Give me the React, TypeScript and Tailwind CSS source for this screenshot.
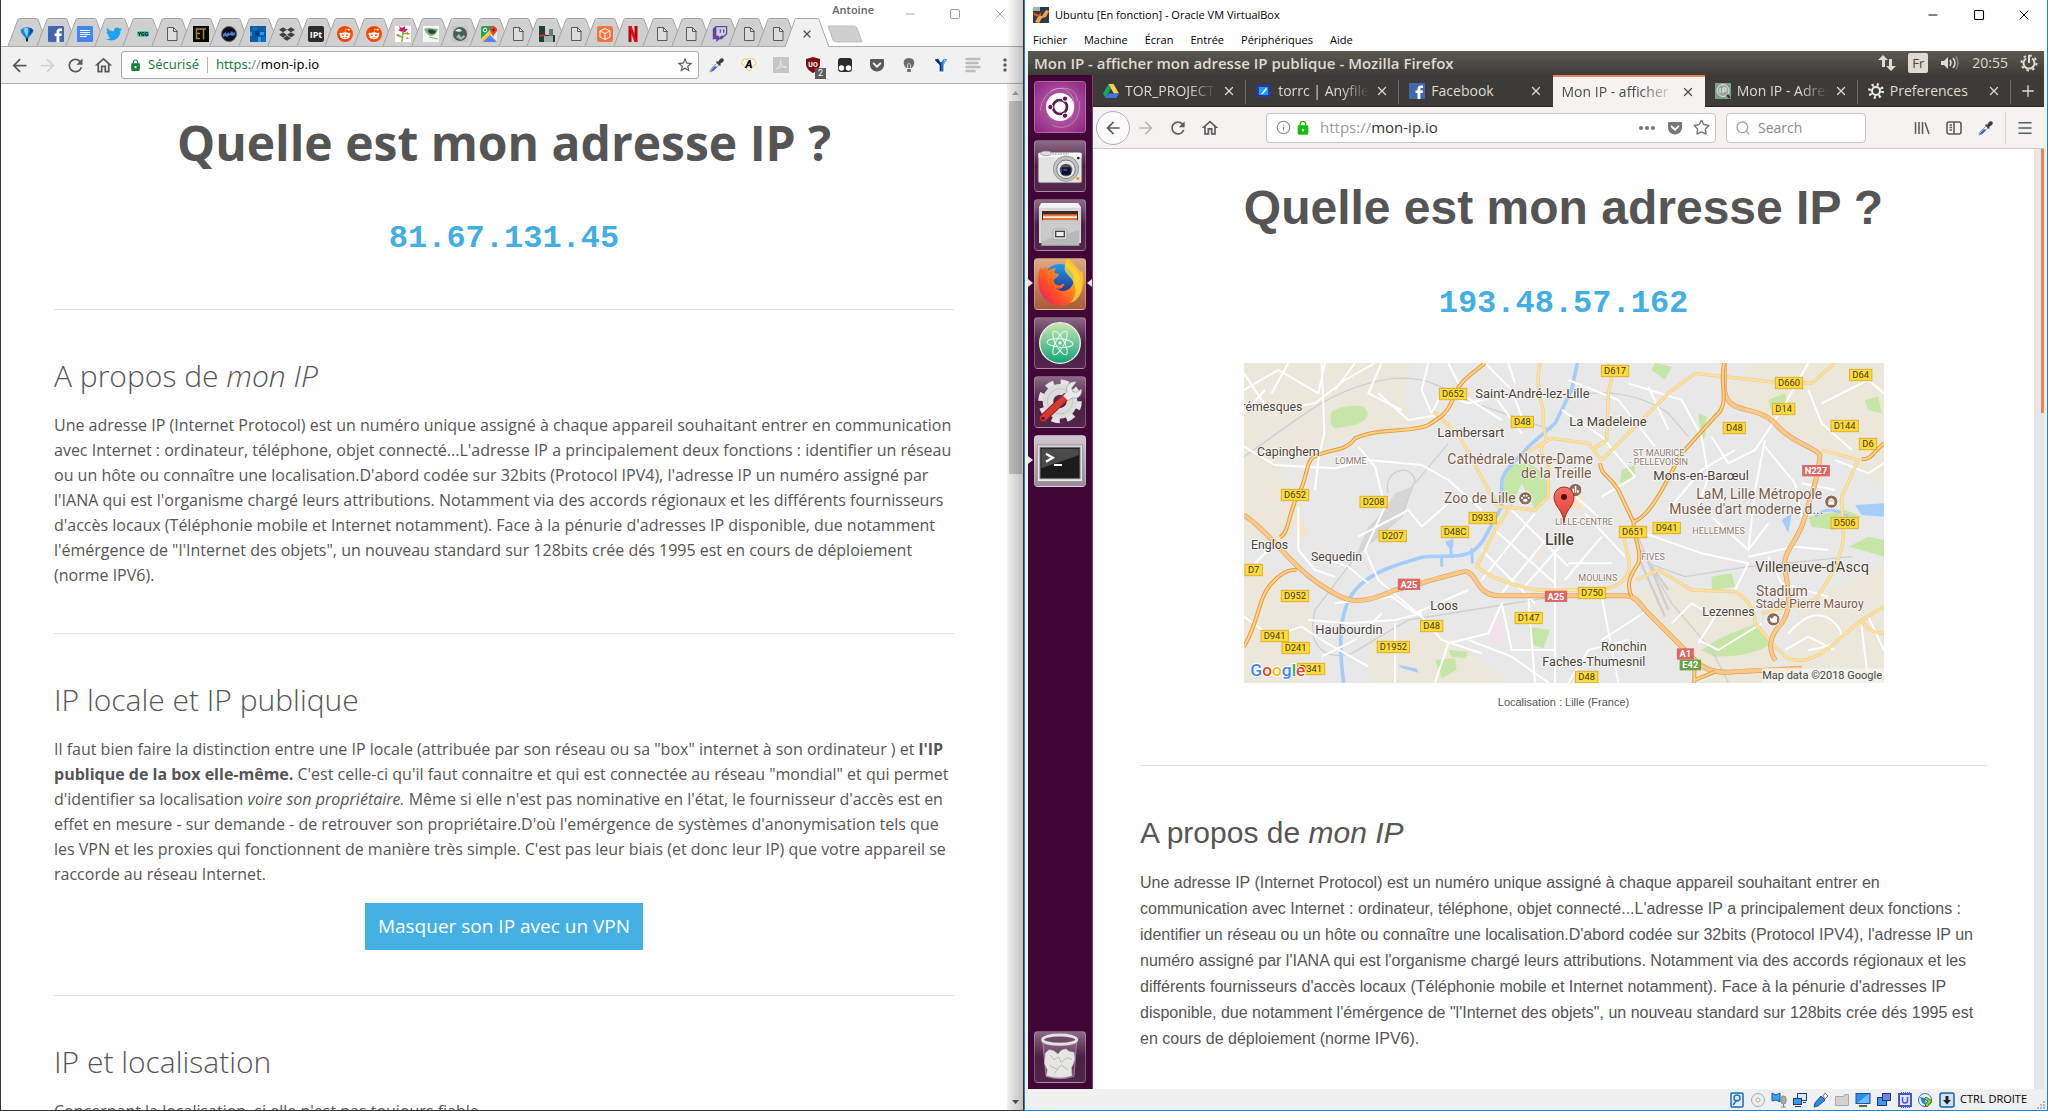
import React from "react";
import {
  FaDropbox,
  FaGetPocket,
  FaRedditAlien,
  FaTwitch,
  FaTwitter,
} from "react-icons/fa";
import {
  MdArrowBack,
  MdArrowForward,
  MdLock,
  MdMoreVert,
  MdOutlineHome,
  MdRefresh,
  MdStarBorder,
} from "react-icons/md";
import { Info, Menu, Minus, Plus, Search, Square, Star, X } from "lucide-react";

/* ---------- small icons ---------- */

function PageIcon() {
  return (
    <svg viewBox="0 0 16 16" className="size-4" fill="none" stroke="#5a5a5a">
      <path d="M3.500 1.500h6l3.500 3.500v9.500h-9.500z" fill="#dcdcdc" />
      <path d="M9.500 1.500v4h4" />
    </svg>
  );
}

function Balloon() {
  return (
    <svg viewBox="0 0 16 16" className="size-4">
      <path d="M8 15C7 11 1.500 8 1.500 4Q8-2 14.500 4C14.500 8 9 11 8 15z" fill="#1a86d6" />
      <path d="M8 11C7 8 5 6 4.500 3Q8 0 9 3 9 8 8 11z" fill="#8fd0ff" />
      <path d="M9 10C11 8 14 6 14 4Q12 2 11 2 11 7 9 10z" fill="#0b4a86" />
      <path d="M7 12h2v3.500H7z" fill="#062a4c" />
    </svg>
  );
}

function VIcon() {
  return (
    <svg viewBox="0 0 16 16" className="size-4">
      <path d="M1 2l4-1 3 4 3-4 4 1-4 6v7H6V8z" fill="#1b6fd0" stroke="#fff" />
      <path d="M2 3l3-1 3 5v7H7V8z" fill="#0b2c66" />
      <path d="M11 2l3 1-4 5z" fill="#6cc0ff" />
    </svg>
  );
}

function Box({ className, children }: { className: string; children?: React.ReactNode }) {
  return (
    <span className={`flex size-4 items-center justify-center overflow-hidden ${className}`}>
      {children}
    </span>
  );
}

function FacebookIcon() {
  return (
    <svg viewBox="0 0 16 16" className="size-4 shrink-0">
      <rect width="16" height="16" rx="1" fill="#4267b2" />
      <path
        d="M8.500 16V10H6.500V7.500h2V6c0-2.200 1.200-3.500 3.400-3.500H14v2.400h-1.300c-1 0-1.300.4-1.300 1.300v1.300H14L13.600 10h-2.200v6z"
        fill="#fff"
      />
    </svg>
  );
}

function Dropper() {
  return (
    <svg viewBox="0 0 16 16" className="size-4">
      <path d="M1 15l1-3 6-6 2 2-6 6z" fill="#dfe6f5" stroke="#7b7b7b" strokeWidth=".7" />
      <path d="M2 14l1-2 3-3 2 1-4 4z" fill="#3d63d8" />
      <path d="M7 5l4 4 1-1-1-1 3-2c2-2 0-5-3-3L9 5 8 4z" fill="#3b3f45" />
    </svg>
  );
}

const page = <PageIcon />;
const reddit = (
  <Box className="rounded-full bg-[#ff4500] text-white">
    <FaRedditAlien className="size-3" />
  </Box>
);

const favicons: { title: string; icon: React.ReactNode }[] = [
  { title: "Ballon", icon: <Balloon /> },
  { title: "Facebook", icon: <FacebookIcon /> },
  {
    title: "Docs",
    icon: (
      <svg viewBox="0 0 16 16" className="size-4">
        <rect width="16" height="16" rx="1" fill="#4285f4" />
        <path d="M3 4.500h10M3 6.500h10M3 8.500h10M3 10.500h7" stroke="#fff" />
      </svg>
    ),
  },
  { title: "Twitter", icon: <FaTwitter className="size-4 text-[#1da1f2]" /> },
  {
    title: "YGG",
    icon: (
      <svg viewBox="0 0 16 16" className="size-4">
        <rect x="2" y="5" width="12" height="6" rx="2" fill="#40d8c0" />
        <text x="8" y="10" textAnchor="middle" fontSize="5" fontWeight="900" fontFamily="Inter" fill="#111">
          YGG
        </text>
      </svg>
    ),
  },
  { title: "Page", icon: page },
  {
    title: "ET",
    icon: (
      <svg viewBox="0 0 16 16" className="size-4">
        <rect width="16" height="16" fill="#050505" />
        <path d="M8 3H3.500v9.500H7M3.500 7.500H7M8 3h5M10.500 3v10.500" stroke="#a8862f" fill="none" strokeWidth="1.500" />
      </svg>
    ),
  },
  {
    title: "Globe",
    icon: (
      <svg viewBox="0 0 16 16" className="size-4">
        <circle cx="8" cy="8" r="7.500" fill="#0b1020" stroke="#5c6064" />
        <path d="M2 8l3-2v2l3-2v2l3-3 1 2 2-1v3l-3 1-2-1-3 2-2-1-2 1z" fill="#4a7fc0" />
      </svg>
    ),
  },
  {
    title: "Blocs",
    icon: (
      <svg viewBox="0 0 16 16" className="size-4">
        <rect width="16" height="16" fill="#0a5aa8" />
        <path d="M5 5h4v5H5z" fill="#0c3f7a" />
        <path d="M10 6h4v3h-4zM8 11h3v5H8zM0 6h2v4H0z" fill="#1aa3ec" />
        <path d="M3 1h4v3H3zM12 11h4v5h-4z" fill="#0b70c4" />
      </svg>
    ),
  },
  { title: "Dropbox", icon: <FaDropbox className="size-4 text-[#3f3f3f]" /> },
  {
    title: "IPt",
    icon: (
      <Box className="rounded-xs bg-[#2c2c2c]">
        <svg viewBox="0 0 16 16" className="size-4">
          <text x="8" y="11.500" textAnchor="middle" fontSize="9" fontWeight="700" fontFamily="Open Sans" fill="#fff">
            IPt
          </text>
        </svg>
      </Box>
    ),
  },
  { title: "Reddit", icon: reddit },
  { title: "Reddit 2", icon: reddit },
  {
    title: "Fleur",
    icon: (
      <svg viewBox="0 0 16 16" className="size-4">
        <rect width="16" height="16" fill="#fff" />
        <path d="M7 6L3 4l2-1-1-3 3 2 3-2v3l3 0-3 3-3 1z" fill="#d81b60" />
        <path d="M8 5c0 5-1 8-1 11M8 8l5-1M7 11l-5-2" stroke="#7cb342" fill="none" strokeWidth="1.500" />
        <path d="M12 6l3 2-3 1zM4 8L1 9l3 2zM12 11l2 2-3 0z" fill="#ef6c3a" />
      </svg>
    ),
  },
  {
    title: "Aigle",
    icon: (
      <svg viewBox="0 0 16 16" className="size-4">
        <rect width="16" height="16" fill="#f4f8f4" />
        <path d="M1 3c5-2 9 0 14 0-1 4-3 6-6 7-4 0-6-3-8-7z" fill="#7fae8a" />
        <path d="M5 4c3-1 6 0 8 1-1 3-3 3-5 3-2-1-3-2-3-4z" fill="#234a2d" />
        <path d="M6 11l9 2" stroke="#6dc06f" />
      </svg>
    ),
  },
  {
    title: "Sphère",
    icon: (
      <svg viewBox="0 0 16 16" className="size-4">
        <rect width="16" height="16" fill="#c4c6c4" />
        <circle cx="8" cy="8" r="7" fill="#48605a" />
        <path d="M3 5c3-3 6-2 7 0-2 1-4 1-7 0z" fill="#e8eeee" />
        <path d="M4 11l3-3 2 3 3-2 1 2-4 3z" fill="#a9b9b0" />
      </svg>
    ),
  },
  {
    title: "Maps",
    icon: (
      <svg viewBox="0 0 16 16" className="size-4">
        <path d="M0 2c0-1 1-2 2-2h12c1 0 2 1 2 2v12c0 1-1 2-2 2H2c-1 0-2-1-2-2z" fill="#e8eaed" />
        <path d="M0 2c0-1 1-2 2-2h11L0 13z" fill="#2ba24c" />
        <path d="M8 8l8 8H1z" fill="#4a89f3" />
        <path d="M0 14L12 2l2 2L2 16z" fill="#fbc02d" />
        <path d="M12 0c2 0 4 1 4 4 0 2-2 3-4 7-1-4-3-5-3-7 0-3 1-4 3-4z" fill="#e24436" />
        <circle cx="12.500" cy="4" r="1.300" fill="#7b1d14" />
        <circle cx="4" cy="4" r="1.800" fill="none" stroke="#fff" />
      </svg>
    ),
  },
  { title: "Page 2", icon: page },
  {
    title: "Photo",
    icon: (
      <svg viewBox="0 0 16 16" className="size-4">
        <rect width="16" height="16" fill="#1d4034" />
        <path d="M6 0h10v9H6z" fill="#c9d3cc" />
        <path d="M5 10h9v6H5z" fill="#9fb5aa" />
        <path d="M0 9l7-1v2l-6 1z" fill="#d0322b" />
        <path d="M10 3h4v7h-4z" fill="#6c7b73" />
      </svg>
    ),
  },
  { title: "Page 3", icon: page },
  {
    title: "Cube",
    icon: (
      <svg viewBox="0 0 16 16" className="size-4" fill="none" stroke="#fff">
        <rect width="16" height="16" rx="2.500" fill="#f4743b" stroke="none" />
        <path d="M8 2.500l5 2.500v6l-5 2.500L3 11V5zM3 5l5 2.500L13 5M8 7.500v6" />
      </svg>
    ),
  },
  {
    title: "Netflix",
    icon: (
      <svg viewBox="0 0 16 16" className="size-4">
        <path d="M3.500 0h3v16h-3zM9.500 0h3v16h-3z" fill="#b1060f" />
        <path d="M3.500 0h3l6 16h-3z" fill="#e50914" />
      </svg>
    ),
  },
  { title: "Page 4", icon: page },
  { title: "Page 5", icon: page },
  { title: "Twitch", icon: <FaTwitch className="size-4 text-[#6441a5]" /> },
  { title: "Page 6", icon: page },
  { title: "Page 7", icon: page },
];

/* ---------- Chrome window ---------- */

function ChromeTabs() {
  return (
    <div className="relative flex h-[46px] items-end bg-white pl-[12px]">
      <div className="flex w-[779px] shrink-0">
        {favicons.map((tab) => (
          <button key={tab.title} aria-label={tab.title} className="relative flex h-7 flex-1 items-center justify-center">
            <svg viewBox="0 0 42 28" className="absolute -left-[6px] top-0 h-7 w-[42px]">
              <path d="M1 28L11 1.500Q11.500 .5 12.500 .5h17Q30.500 .5 31 1.500L41 28" fill="#d0d0d0" stroke="#a3a3a3" />
            </svg>
            <span className="relative mt-1">{tab.icon}</span>
          </button>
        ))}
      </div>
      <button aria-label="Fermer l'onglet" className="relative flex h-7 w-[30px] shrink-0 items-center justify-center">
        <svg viewBox="0 0 46 29" className="absolute -left-[8px] top-0 z-10 h-[29px] w-[46px]">
          <path d="M1 29L11 1.500Q11.500 .5 12.500 .5h21Q34.500 .5 35 1.500L45 29" fill="#f1f1f1" stroke="#a8a8a8" />
        </svg>
        <X className="relative z-10 mt-1 size-3 text-[#4c4c4c]" strokeWidth={2.500} />
      </button>
      <button aria-label="Nouvel onglet" className="mb-[3px] ml-[5px] shrink-0 self-end">
        <svg viewBox="0 0 36 18" className="h-[18px] w-9">
          <path d="M1 1h26q2 0 3 2l5 14H9q-2 0-3-2z" fill="#cfcfcf" stroke="#bdbdbd" />
        </svg>
      </button>
      <span className="absolute top-[3px] right-[149px] font-['Open_Sans'] text-[11px] leading-[14px] font-semibold text-[#666]">
        Antoine
      </span>
      <div className="flex h-full flex-1 items-start justify-end text-[#9a9a9a]">
        <button aria-label="Réduire" className="flex h-7 w-[45px] items-center justify-center">
          <Minus className="size-[14px]" strokeWidth={1.500} />
        </button>
        <button aria-label="Agrandir" className="flex h-7 w-[45px] items-center justify-center">
          <Square className="size-3" strokeWidth={2} />
        </button>
        <button aria-label="Fermer" className="flex h-7 w-[46px] items-center justify-center">
          <X className="size-4" strokeWidth={1.300} />
        </button>
      </div>
    </div>
  );
}

const extensions: { title: string; icon: React.ReactNode }[] = [
  { title: "Pipette", icon: <Dropper /> },
  {
    title: "A",
    icon: (
      <svg viewBox="0 0 16 16" className="size-4">
        <path d="M3 2h10l2.500 4L8 14 .5 6z" fill="#fff" stroke="#f6c432" />
        <text x="8" y="11" textAnchor="middle" fontSize="11" fontWeight="900" fontStyle="italic" fontFamily="Roboto">
          A
        </text>
      </svg>
    ),
  },
  {
    title: "PDF",
    icon: (
      <svg viewBox="0 0 16 16" className="size-4">
        <rect width="16" height="16" fill="#c6c6c6" />
        <path d="M3 12c4-2 5-6 4.500-9M7.500 5c1 4 3 6 6 5.500M4 12c2-2 6-3 9-2" stroke="#ececec" fill="none" />
      </svg>
    ),
  },
  {
    title: "uBlock",
    icon: (
      <span className="relative">
        <svg viewBox="0 0 16 16" className="size-4">
          <path d="M8 0l7 2v5c0 4-3 7-7 9-4-2-7-5-7-9V2z" fill="#800f14" />
          <text x="8" y="9.500" textAnchor="middle" fontSize="7" fontWeight="700" fontFamily="Roboto" fill="#fff">
            UO
          </text>
        </svg>
        <span className="absolute top-[11px] left-[10px] flex h-[11px] w-[11px] items-center justify-center bg-[#5c5c5c] font-['Roboto'] text-[9px] leading-none text-white">
          2
        </span>
      </span>
    ),
  },
  {
    title: "Tampermonkey",
    icon: (
      <svg viewBox="0 0 16 16" className="size-4">
        <rect x="1" y="1" width="14" height="14" rx="3" fill="#2c2c2c" />
        <circle cx="4.500" cy="11" r="2.700" fill="#fff" />
        <circle cx="11.500" cy="11" r="2.700" fill="#fff" />
      </svg>
    ),
  },
  { title: "Pocket", icon: <FaGetPocket className="size-4 text-[#5a5a5a]" /> },
  {
    title: "Ampoule",
    icon: (
      <svg viewBox="0 0 16 16" className="size-4">
        <path d="M8 1c4 0 6 3 5 6 0 2-2 3-2 4H5c0-1-2-2-2-4-1-3 1-6 5-6z" fill="#6b6b6b" />
        <path d="M6.500 14V8c0-2 3-2 3 0v6" stroke="#d9d9d9" fill="none" />
        <path d="M6 12h4v3H6z" fill="#777" />
      </svg>
    ),
  },
  { title: "V", icon: <VIcon /> },
  {
    title: "Lecture",
    icon: (
      <svg viewBox="0 0 16 16" className="size-4" stroke="#bdbdbd" strokeWidth="2.500" strokeLinecap="round">
        <path d="M1.500 2h13M1.500 6h11M1.500 10h13M1.500 14h8" />
      </svg>
    ),
  },
];

function ChromeToolbar() {
  return (
    <div className="flex h-[38px] items-center border-y border-[#ababab] bg-[#f1f1f1] pl-2 text-[#5a5a5a]">
      <button aria-label="Précédent" className="mr-[7px]">
        <MdArrowBack className="size-[21px]" />
      </button>
      <button aria-label="Suivant" className="mr-[7px] text-[#d2d2d2]">
        <MdArrowForward className="size-[21px]" />
      </button>
      <button aria-label="Actualiser" className="mr-[7px]">
        <MdRefresh className="size-[21px]" />
      </button>
      <button aria-label="Accueil" className="mr-[7px]">
        <MdOutlineHome className="size-[21px]" />
      </button>
      <div className="flex h-7 flex-1 items-center rounded-[3px] border border-[#a9a9a9] bg-white font-['Noto_Sans'] text-[13px]">
        <MdLock className="ml-[7px] size-[13px] text-[#188038]" />
        <span className="ml-[6px] text-[#188038]">Sécurisé</span>
        <span className="mx-2 h-4 w-px bg-[#b5b5b5]" />
        <span className="text-[#188038]">https:</span>
        <span className="text-[#888]">//</span>
        <span className="text-black">mon-ip.io</span>
        <button aria-label="Favori" className="mr-1 ml-auto">
          <MdStarBorder className="size-[18px]" />
        </button>
      </div>
      <div className="ml-[10px] flex gap-4">
        {extensions.map((ext) => (
          <button key={ext.title} aria-label={ext.title} className="flex size-4">
            {ext.icon}
          </button>
        ))}
      </div>
      <button aria-label="Menu" className="mr-2 ml-[14px]">
        <MdMoreVert className="size-5" />
      </button>
    </div>
  );
}

function LeftPage() {
  return (
    <main className="min-w-0 flex-1 overflow-hidden px-[53px] font-['Open_Sans'] text-base leading-[25px] text-[#555]">
      <h1 className="mt-[29px] text-center text-5xl leading-[60px] font-bold">Quelle est mon adresse IP ?</h1>
      <p className="mt-[46px] text-center font-['Liberation_Mono'] text-[32px] leading-10 font-bold text-[#42afe3]">
        81.67.131.45
      </p>
      <hr className="mt-[50px] border-[#e1e1e1]" />
      <h2 className="mt-[46px] text-3xl leading-10 font-light">
        A propos de <em>mon IP</em>
      </h2>
      <p className="mt-[17px]">
        Une adresse IP (Internet Protocol) est un numéro unique assigné à chaque appareil souhaitant entrer en
        communication avec Internet : ordinateur, téléphone, objet connecté...L'adresse IP a principalement deux
        fonctions : identifier un réseau ou un hôte ou connaître une localisation.D'abord codée sur 32bits (Protocol
        IPV4), l'adresse IP un numéro assigné par l'IANA qui est l'organisme chargé leurs attributions. Notamment via
        des accords régionaux et les différents fournisseurs d'accès locaux (Téléphonie mobile et Internet notamment).
        Face à la pénurie d'adresses IP disponible, due notamment l'émérgence de "l'Internet des objets", un nouveau
        standard sur 128bits crée dés 1995 est en cours de déploiement (norme IPV6).
      </p>
      <hr className="mt-[45px] border-[#e1e1e1]" />
      <h2 className="mt-[46px] text-3xl leading-10 font-light">IP locale et IP publique</h2>
      <p className="mt-[17px]">
        Il faut bien faire la distinction entre une IP locale (attribuée par son réseau ou sa "box" internet à son
        ordinateur ) et <strong className="font-bold">l'IP publique de la box elle-même.</strong> C'est celle-ci qu'il
        faut connaitre et qui est connectée au réseau "mondial" et qui permet d'identifier sa localisation{" "}
        <em>voire son propriétaire.</em> Même si elle n'est pas nominative en l'état, le fournisseur d'accès est en
        effet en mesure - sur demande - de retrouver son propriétaire.D'où l'emérgence de systèmes d'anonymisation tels
        que les VPN et les proxies qui fonctionnent de manière très simple. C'est pas leur biais (et donc leur IP) que
        votre appareil se raccorde au réseau Internet.
      </p>
      <div className="mt-4 text-center">
        <a href="#vpn" className="inline-flex h-[47px] items-center bg-[#45b0e3] px-[13px] text-[19px] text-white">
          Masquer son IP avec un VPN
        </a>
      </div>
      <hr className="mt-[45px] border-[#e1e1e1]" />
      <h2 className="mt-[46px] text-3xl leading-10 font-light">IP et localisation</h2>
      <p className="mt-[17px]">Concernant la localisation, si elle n'est pas toujours fiable</p>
    </main>
  );
}

function ChromeWindow() {
  return (
    <section className="relative flex min-w-0 flex-1 flex-col overflow-hidden border-x border-b border-[#333] bg-white">
      <ChromeTabs />
      <ChromeToolbar />
      <div className="flex min-h-0 flex-1">
        <LeftPage />
        <div className="flex w-4 flex-col items-center bg-[#f1f1f1]">
          <svg viewBox="0 0 17 17" className="size-[17px] shrink-0">
            <path d="M5 11l3.500-4 3.500 4z" fill="#a3a3a3" />
          </svg>
          <div className="h-[373px] w-[13px] bg-[#c1c1c1]" />
          <svg viewBox="0 0 17 17" className="mt-auto size-[17px] shrink-0">
            <path d="M5 7l3.500 4L12 7z" fill="#505050" />
          </svg>
        </div>
      </div>
      <div className="pointer-events-none absolute inset-y-0 right-0 w-4 bg-linear-to-r from-transparent to-black/20" />
    </section>
  );
}

/* ---------- Ubuntu guest ---------- */

function Tile({ title, className, children }: { title: string; className: string; children: React.ReactNode }) {
  return (
    <button
      aria-label={title}
      className={`block size-[52px] shrink-0 overflow-hidden rounded-[4px] border border-white/25 ${className}`}
    >
      <svg viewBox="3 3 150 150" className="size-full">
        {children}
      </svg>
    </button>
  );
}

function Launcher() {
  const dark = "bg-linear-to-b from-[#8c6a86] via-[#4c1f44] to-[#54254c]";
  return (
    <nav className="relative flex w-[65px] shrink-0 flex-col items-center gap-[7px] border-r border-[#7c3f74] bg-[#400635] py-[6px]">
      <Tile title="Ubuntu" className="bg-[radial-gradient(circle,#c06fb4,#8e2380)]">
        <path d="M20 90C20 10 130 0 130 60M135 60c10 80-60 90-80 70M50 30C100 0 140 60 110 110" fill="none" stroke="#fff" strokeOpacity=".35" strokeWidth="3" />
        <circle cx="78" cy="78" r="42" fill="#fff" />
        <circle cx="78" cy="78" r="21" fill="none" stroke="#5c1a53" strokeWidth="8" />
        <g fill="#5c1a53" stroke="#fff" strokeWidth="3">
          <circle cx="49" cy="78" r="8" />
          <circle cx="93" cy="53" r="8" />
          <circle cx="93" cy="104" r="8" />
        </g>
      </Tile>
      <Tile title="Appareil photo" className={dark}>
        <rect x="13" y="38" width="130" height="90" rx="5" fill="#e3e3e3" stroke="#8f8f8f" strokeWidth="2" />
        <rect x="13" y="38" width="130" height="14" rx="5" fill="#fafafa" />
        <ellipse cx="36" cy="40" rx="16" ry="7" fill="#ddd" stroke="#888" strokeWidth="2" />
        <path d="M55 42h50" stroke="#888" strokeWidth="3" strokeDasharray="5 3" />
        <circle cx="96" cy="86" r="38" fill="#c2c2c2" stroke="#7c7c7c" strokeWidth="2" />
        <circle cx="96" cy="88" r="28" fill="#e8e8e8" stroke="#777" strokeWidth="3" />
        <circle cx="96" cy="90" r="19" fill="#555" />
        <rect x="83" y="82" width="27" height="22" rx="3" fill="#0b1230" />
        <path d="M88 86h12v6H88z" fill="#325aa8" />
        <circle cx="133" cy="54" r="4" fill="#222" />
        <rect x="127" y="111" width="9" height="9" fill="#f0a020" />
      </Tile>
      <Tile title="Fichiers" className={dark}>
        <path d="M22 12h110l9 12v108H15V24z" fill="#d8d8d8" />
        <path d="M22 12h110l9 14H15z" fill="#f4f4f4" />
        <rect x="24" y="36" width="108" height="40" fill="#3a2a22" />
        <path d="M27 46h102v20H27z" fill="#e9743a" />
        <path d="M27 52h102v5H27z" fill="#fff0dc" />
        <path d="M22 64h114v76H22z" fill="#b8b8b8" />
        <path d="M22 64h114v30L22 126z" fill="#cbcbcb" />
        <rect x="57" y="90" width="42" height="32" rx="6" fill="#dcdcdc" stroke="#999" strokeWidth="2" />
        <rect x="65" y="97" width="26" height="16" fill="#eee" stroke="#444" strokeWidth="4" />
      </Tile>
      <Tile title="Firefox" className="bg-linear-to-b from-[#d9aa85] to-[#a85a36]">
        <defs>
          <linearGradient id="fox" x1="1" y1="0" x2="0" y2="1">
            <stop offset="0" stopColor="#ffe93d" />
            <stop offset=".4" stopColor="#ff9a1a" />
            <stop offset=".7" stopColor="#ff4a2a" />
            <stop offset="1" stopColor="#e0107a" />
          </linearGradient>
          <linearGradient id="globe" x1="0" y1="0" x2="0" y2="1">
            <stop offset="0" stopColor="#1a9cf0" />
            <stop offset="1" stopColor="#2a1a78" />
          </linearGradient>
        </defs>
        <circle cx="78" cy="70" r="52" fill="url(#globe)" />
        <path d="M19 28l4 6c5-6 12-7 16-6l3 10c8-6 17-8 24-7-4 5-6 10-5 14l14 3c-2 10-12 12-16 18 0 10 8 16 16 16 8 0 10-6 16-5-2 12-14 18-26 14 26 20 56 0 54-30 0-14-6-22-16-28-14-8-12-22-2-38 2 12 24 26 34 40 4 6 4 8 4 8l4-6c12 30 6 74-26 94-34 22-78 12-94-22C8 84 10 54 19 28z" fill="url(#fox)" />
        <path d="M101 9c0 12 44 28 42 78-2 32-22 44-34 48 24-28 16-56 2-74-18-18-28-30-10-52z" fill="#ffdc3a" fillOpacity=".75" />
      </Tile>
      <Tile title="Atom" className={dark}>
        <defs>
          <linearGradient id="atom" x1="0" y1="0" x2="0" y2="1">
            <stop offset="0" stopColor="#c9e8b0" />
            <stop offset="1" stopColor="#12a377" />
          </linearGradient>
        </defs>
        <circle cx="78" cy="78" r="61" fill="url(#atom)" stroke="#f3f3f3" strokeWidth="4" />
        <g fill="none" stroke="#e9fbf0" strokeWidth="3">
          <ellipse cx="78" cy="78" rx="39" ry="13" transform="rotate(5 78 78)" />
          <ellipse cx="78" cy="78" rx="39" ry="13" transform="rotate(62 78 78)" />
          <ellipse cx="78" cy="78" rx="39" ry="13" transform="rotate(118 78 78)" />
        </g>
        <circle cx="78" cy="78" r="5" fill="#fff" />
      </Tile>
      <Tile title="Paramètres" className={dark}>
        <circle cx="78" cy="76" r="57" fill="none" stroke="#e4e4e4" strokeWidth="17" strokeDasharray="24 20.800" />
        <circle cx="78" cy="76" r="36" fill="none" stroke="#dcdcdc" strokeWidth="32" />
        <circle cx="78" cy="76" r="38" fill="none" stroke="#c3c3c3" strokeWidth="3" />
        <path d="M28 126l66-62" stroke="#8f1a1a" strokeWidth="24" strokeLinecap="round" />
        <path d="M28 126l66-62" stroke="#d33a34" strokeWidth="19" strokeLinecap="round" />
        <path d="M88 60l14 14 14-9c16 6 30-8 26-26l-14 10-12-2-3-11 14-18c-18-4-34 10-28 28z" fill="#e9e9e9" stroke="#999" strokeWidth="2" />
        <circle cx="27" cy="127" r="5" fill="#5a0d0d" />
      </Tile>
      <Tile title="Terminal" className="bg-linear-to-b from-[#cfc6cd] to-[#998c97]">
        <rect x="10" y="30" width="136" height="110" rx="3" fill="#e6e6e6" stroke="#777" strokeWidth="2" />
        <rect x="18" y="37" width="120" height="94" fill="#1c1c1c" stroke="#777" strokeWidth="3" />
        <path d="M22 41h112v20L22 100z" fill="#4a4a4a" />
        <path d="M36 56l20 12-20 12" fill="none" stroke="#fff" strokeWidth="7" />
        <path d="M60 90h24" stroke="#fff" strokeWidth="6" />
      </Tile>
      <div className="mt-auto">
        <Tile title="Corbeille" className={dark}>
          <path d="M26 30l10 106q42 14 84 0l8-106z" fill="#fff" fillOpacity=".15" stroke="#b9a6b6" strokeWidth="2" />
          <path d="M34 66l12-10 14 4 12 10 10-12 14-4 10 8 14 2 2 20-4 14-6 12 2 24q-36 12-76 0l2-18-8-18z" fill="#e6e6e4" stroke="#c9c9c6" strokeWidth="2" />
          <path d="M48 72l12 14 14-8 8 16 18-14 14 6M46 104l22 10 14-12 20 14M60 128l12-14" stroke="#b9b9b4" fill="none" strokeWidth="3" />
          <ellipse cx="77" cy="26" rx="51" ry="14" fill="#6b4a66" stroke="#e2e2e2" strokeWidth="9" />
        </Tile>
      </div>
      {/* running-app markers */}
      <i className="absolute top-[204px] left-0 border-y-4 border-l-5 border-y-transparent border-l-[#e5e0e4]" />
      <i className="absolute top-[204px] right-0 border-y-4 border-r-5 border-y-transparent border-r-[#e5e0e4]" />
      <i className="absolute top-[381px] left-0 border-y-4 border-l-5 border-y-transparent border-l-[#e5e0e4]" />
    </nav>
  );
}

function TopPanel() {
  return (
    <div className="flex h-6 shrink-0 items-center bg-linear-to-b from-[#5b5951] to-[#3d3c37] px-[6px] font-['Open_Sans'] text-sm text-[#dfdbd2]">
      <span className="text-[15px] leading-5 font-semibold">Mon IP - afficher mon adresse IP publique - Mozilla Firefox</span>
      <div className="ml-auto flex items-center">
        <svg viewBox="0 0 18 18" className="mr-3 size-[18px]" fill="#dfdbd2">
          <path d="M5 1l5 5H7v7H4V6H0zM13 17l-5-5h3V5h3v7h4z" />
        </svg>
        <span className="mr-3 flex h-5 w-5 items-center justify-center rounded-xs bg-[#dfdbd2] text-[13px] text-[#45443f]">
          Fr
        </span>
        <svg viewBox="0 0 20 16" className="mr-3 h-4 w-5" fill="none" stroke="#dfdbd2" strokeWidth="1.500">
          <path d="M1 6h3l4-4v12l-4-4H1z" fill="#dfdbd2" stroke="none" />
          <path d="M10 5q2 3 0 6M13 3q4 5 0 10" />
          <path d="M16 1.500q4 6.500 0 13" strokeOpacity=".4" />
        </svg>
        <span className="mr-3">20:55</span>
        <svg viewBox="0 0 18 18" className="size-[18px]" fill="none" stroke="#dfdbd2">
          <circle cx="9" cy="9" r="7.500" strokeWidth="2" strokeDasharray="2.500 3.390" />
          <path d="M6 4.500a5.500 5.500 0 1 0 6 0" strokeWidth="2" />
          <path d="M9 1v8" strokeWidth="2" />
        </svg>
      </div>
    </div>
  );
}

const firefoxTabs: { title: string; icon?: React.ReactNode; active?: boolean }[] = [
  {
    title: "TOR_PROJECT",
    icon: (
      <svg viewBox="0 0 16 16" className="size-4 shrink-0">
        <path d="M5.500 1L0 10.500 2.700 15 8 5.500z" fill="#11a861" />
        <path d="M5.500 1h5L16 10.500h-5.200z" fill="#ffcf48" />
        <path d="M5.500 10.500H16L13.300 15H2.700z" fill="#3777e3" />
      </svg>
    ),
  },
  {
    title: "torrc | Anyfile",
    icon: (
      <svg viewBox="0 0 16 16" className="size-4 shrink-0">
        <rect x="1" y="2" width="13" height="12" fill="#2238b8" />
        <rect x="3" y="4" width="9" height="8" fill="#19a0ee" />
        <path d="M5 11l5-6 1 1-4 5z" fill="#fff" />
      </svg>
    ),
  },
  { title: "Facebook", icon: <FacebookIcon /> },
  { title: "Mon IP - afficher", active: true },
  {
    title: "Mon IP - Adresse",
    icon: (
      <svg viewBox="0 0 16 16" className="size-4 shrink-0">
        <rect width="16" height="16" fill="#7fa088" />
        <circle cx="8" cy="7.500" r="6" fill="#9aa69d" stroke="#dfe8e0" />
        <path d="M5 5v5M8 10V5h3v3H8" stroke="#e8efe9" fill="none" />
        <path d="M12 12l3 3" stroke="#333" strokeWidth="2" />
      </svg>
    ),
  },
  {
    title: "Preferences",
    icon: (
      <svg viewBox="0 0 16 16" className="size-4 shrink-0" fill="none" stroke="#eeeeec">
        <circle cx="8" cy="8" r="4" strokeWidth="2" />
        <circle cx="8" cy="8" r="6.500" strokeWidth="3" strokeDasharray="2 3.100" />
      </svg>
    ),
  },
];

function FirefoxTabs() {
  return (
    <div className="flex h-8 shrink-0 border-b border-[#2b2a27] bg-[#3c3b37] font-['Open_Sans'] text-sm text-[#dfdbd2]">
      {firefoxTabs.map((tab, i) => (
        <div
          key={tab.title}
          className={
            tab.active
              ? "-mb-px flex min-w-0 flex-1 items-center border-t-2 border-[#f0825a] bg-[#f4f3f2] pr-[10px] pl-[9px] text-[#4c4c4c]"
              : "relative flex min-w-0 flex-1 items-center pr-[10px] pl-[10px]"
          }
        >
          {tab.icon}
          <a
            href={`#tab-${i}`}
            className={`${tab.icon ? "ml-[6px]" : ""} min-w-0 flex-1 overflow-hidden whitespace-nowrap ${
              tab.title.length > 11 || i === 0 ? "mask-r-from-70%" : ""
            }`}
          >
            {tab.title}
          </a>
          <button aria-label="Fermer l'onglet" className="ml-[6px]">
            <X className="size-[14px]" strokeWidth={2.200} />
          </button>
          {!tab.active && i !== 2 && <span className="absolute top-[5px] right-0 h-6 w-px bg-[#6b6a66]" />}
        </div>
      ))}
      <button aria-label="Nouvel onglet" className="flex w-[33px] items-center justify-center">
        <Plus className="size-[18px]" strokeWidth={1.800} />
      </button>
    </div>
  );
}

function FirefoxToolbar() {
  return (
    <div className="flex h-[42px] shrink-0 items-center border-b border-[#c9c5c1] bg-[#f4f3f2] pl-[3px] font-['Open_Sans'] text-sm text-[#5c5c5c]">
      <button aria-label="Back" className="flex size-[34px] items-center justify-center rounded-full border border-[#b2b0ad] bg-[#fbfbfb]">
        <MdArrowBack className="size-5" />
      </button>
      <button aria-label="Forward" className="ml-[6px] text-[#b9b8b6]">
        <MdArrowForward className="size-5" />
      </button>
      <button aria-label="Reload" className="ml-3">
        <MdRefresh className="size-5" />
      </button>
      <button aria-label="Home" className="ml-3">
        <MdOutlineHome className="size-5" />
      </button>
      <div className="ml-[46px] flex h-[30px] flex-1 items-center rounded-[4px] border border-[#c6c3bf] bg-white px-[9px] text-[15px]">
        <Info className="size-[15px] text-[#8a8a8a]" strokeWidth={1.800} />
        <MdLock className="ml-1 size-4 text-[#12bc00]" />
        <span className="ml-[9px] text-[#9a9a9a]">https://</span>
        <span className="text-[#333]">mon-ip.io</span>
        <span className="mr-3 ml-auto flex gap-[2px]">
          <i className="size-1 rounded-full bg-[#777]" />
          <i className="size-1 rounded-full bg-[#777]" />
          <i className="size-1 rounded-full bg-[#777]" />
        </span>
        <FaGetPocket className="mr-[10px] size-4 text-[#777]" />
        <Star className="-mr-1 size-[17px] text-[#777]" strokeWidth={2} />
      </div>
      <label className="ml-[10px] flex h-[30px] w-[140px] items-center rounded-[4px] border border-[#c6c3bf] bg-white pl-2">
        <Search className="size-4 text-[#a3a3a3]" strokeWidth={2} />
        <input type="search" aria-label="Search" placeholder="Search" className="ml-[7px] w-[90px] outline-none placeholder:text-[#8a8a8a]" />
      </label>
      <button aria-label="Library" className="ml-12">
        <svg viewBox="0 0 16 16" className="size-4" stroke="#5c5c5c" fill="none" strokeWidth="1.600">
          <path d="M1.500 2v12M5 2v12M8.500 2v12M11 2.500l4 11.500" />
        </svg>
      </button>
      <button aria-label="Sidebars" className="ml-4">
        <svg viewBox="0 0 16 16" className="size-4" stroke="#5c5c5c" fill="none" strokeWidth="1.600">
          <rect x="1" y="2" width="14" height="12" rx="2" />
          <path d="M8 2v12M3.500 5h2.500M3.500 7.500h2.500M3.500 10h2.500" />
        </svg>
      </button>
      <button aria-label="Color picker" className="ml-4">
        <Dropper />
      </button>
      <span className="ml-[11px] h-8 w-px bg-[#dcdad7]" />
      <button aria-label="Open menu" className="mr-[10px] ml-[10px]">
        <Menu className="size-[18px]" strokeWidth={2} />
      </button>
    </div>
  );
}

/* ---------- map ---------- */

const roadSigns: [number, number, string][] = [
  [654, 132, "D652"], [862, 216, "D48"], [180, 435, "D652"], [416, 456, "D208"], [743, 504, "D933"],
  [660, 546, "D48C"], [473, 558, "D207"], [56, 660, "D7"], [180, 738, "D952"], [881, 804, "D147"],
  [590, 828, "D48"], [119, 858, "D941"], [182, 894, "D241"], [475, 891, "D1952"], [228, 957, "D341"],
  [1140, 63, "D617"], [1662, 99, "D660"], [1877, 75, "D64"], [1646, 177, "D14"], [1498, 234, "D48"],
  [1829, 228, "D144"], [1899, 282, "D6"], [1194, 546, "D651"], [1295, 534, "D941"], [1829, 519, "D506"],
  [1071, 729, "D750"], [1055, 981, "D48"],
];

const redSigns: [number, number, string][] = [
  [522, 703, "A25"], [963, 739, "A25"], [1743, 362, "N227"], [1351, 912, "A1"],
];

const towns: [number, number, string, number][] = [
  [19, 184, "rémesques", 37], [721, 144, "Saint-André-lez-Lille", 39], [607, 262, "Lambersart", 39],
  [66, 319, "Capinghem", 37], [48, 598, "Englos", 37], [228, 634, "Sequedin", 37],
  [586, 779, "Loos", 38], [241, 853, "Haubourdin", 39], [1003, 229, "La Madeleine", 39],
  [1255, 390, "Mons-en-Barœul", 39], [1561, 666, "Villeneuve-d'Ascq", 44], [1402, 798, "Lezennes", 37],
  [1098, 903, "Ronchin", 38], [922, 949, "Faches-Thumesnil", 38],
];

const districts: [number, number, string][] = [
  [300, 341, "LOMME"], [1194, 318, "ST MAURICE"], [1182, 345, "- PELLEVOISIN"], [960, 525, "LILLE-CENTRE"],
  [1372, 552, "HELLEMMES"], [1219, 631, "FIVES"], [1030, 693, "MOULINS"],
];

const places: [number, number, string, number][] = [
  [637, 341, "Cathédrale Notre-Dame", 42], [858, 383, "de la Treille", 42], [627, 458, "Zoo de Lille", 42],
  [1384, 448, "LaM, Lille Métropole", 42], [1303, 491, "Musée d'art moderne d...", 42],
  [1563, 737, "Stadium", 42], [1562, 775, "Stade Pierre Mauroy", 36],
];

const highways = [
  "M27 495C110 550 160 640 250 700S370 770 480 720C560 700 620 680 690 664 730 670 720 735 790 737H1175C1200 740 1210 755 1230 780L1380 930Q1420 975 1500 965L1700 955",
  "M1468 39V120C1480 200 1560 160 1620 220 1670 280 1740 290 1755 315 1750 400 1720 450 1710 500 1690 580 1640 600 1650 660 1670 760 1660 790 1640 820 1600 860 1600 900 1622 932",
];

const mainRoads = [
  "M750 39C700 80 680 90 660 130 640 190 620 200 580 225 530 250 440 230 360 265 330 310 270 295 230 325 210 350 215 400 185 440 160 500 160 550 135 562",
  "M185 661Q150 655 110 700C70 740 70 820 27 890",
  "M1468 39C1450 100 1490 160 1440 200L1340 310C1300 380 1250 500 1195 515",
  "M1095 340C1100 380 1120 370 1150 420L1195 515C1200 580 1220 600 1210 640 1190 670 1170 700 1190 740",
  "M1378 998V930M1380 990L1440 965M1947 280C1920 300 1910 330 1880 328",
];

const yellowRoads = [
  "M595 185L640 225 680 270 760 420 790 470 900 480 940 440V340Q900 300 935 270 920 220 925 180 900 100 915 39",
  "M820 480L780 540 725 650Q790 700 910 720H1100Q1200 700 1180 620L1160 540",
  "M870 310L950 265 1060 280 1100 330 1300 130 1380 70 1600 95 1730 100 1800 39",
  "M1120 39L1130 80 1120 130 1115 270 1070 300",
  "M1205 690L1270 660 1370 720 1500 725Q1560 760 1560 820 1610 880 1650 920 1720 960 1820 860L1880 810 1947 770M1880 810Q1900 850 1947 850",
  "M1580 790L1740 750Q1820 640 1825 560L1820 440 1870 330 1760 300",
];

const minorRoads = [
  "M27 120L130 60 250 130 270 39M27 70L100 180 240 160 330 90 420 39M260 39L268 250 250 330 240 420M27 290L120 345 300 355 400 330 560 345 640 390 740 480",
  "M580 39L560 120 590 190 620 130 700 160 780 140 860 250M430 130L520 210 640 190M370 290L420 350 450 470 390 600 430 690 560 800 620 870 740 910",
  "M190 470L190 600 240 660 300 680M100 600L60 640M27 800L110 860 200 830 260 870 400 950M250 620L340 650 400 700M300 760L470 740 540 790 700 720",
  "M370 560L520 480 560 530 640 460M480 820L480 998M220 810L340 820 480 810 560 790M600 998L640 880 760 850 800 760 830 900 960 900",
  "M740 600L900 760M780 540L960 700M830 480L1000 650M900 490L740 690M940 560L800 730M1000 560L860 720M880 740L900 998M960 600V998",
  "M1000 640H1130M990 690L1100 560M1050 490L1170 620M1000 420L1090 500M980 180L1100 260 1200 380 1100 440M1000 90L1150 150 1260 290",
  "M1180 100L1340 150 1400 260 1420 380 1380 500M1240 110L1300 240M1430 260L1480 340 1560 300 1640 180 1720 39M1590 270L1560 420 1540 600",
  "M1200 540L1400 610 1540 640 1500 720M1540 620L1680 590 1780 600M1300 480L1400 360 1500 300M1590 290L1680 400 1700 500M1430 500L1540 600 1600 520",
  "M1720 120L1760 220 1850 300M1760 160L1900 90 1947 130M1800 330L1900 370 1947 340M1700 400L1800 420M1600 620L1640 700 1780 740",
  "M1100 740L1150 998M1000 998L1060 900 1180 870M1240 780L1100 870M1390 870L1450 900 1580 820M1310 820L1370 760 1440 800 1390 880",
  "M1650 900L1720 860 1800 900M1660 850Q1740 760 1800 820T1720 900M1900 800L1947 900M1880 830L1900 998M700 870L830 920 940 998M440 790L360 870 260 920",
  "M27 190L90 120M160 39L110 130M300 120L360 39M440 39L400 130 500 180M640 39L690 140 800 210M750 39L830 120 860 200M820 39L840 100",
];

function LilleMap() {
  return (
    <svg viewBox="27 39 1920 960" role="img" aria-label="Lille" className="mx-auto block h-auto w-[640px] max-w-full font-['Roboto']">
      <rect x="27" y="39" width="1920" height="960" fill="#e8e8e8" />
      <g fill="#ebe7da">
        <path d="M27 39H540L500 150 560 230 360 250 250 300 130 330 200 480 150 600 27 560z" />
        <path d="M27 620L150 700 240 780 200 998H27z" />
        <path d="M400 870L560 830 700 900 820 998H400z" />
        <path d="M1120 760L1280 700 1540 740 1600 900 1640 998H1420L1200 760z" />
        <path d="M1540 39H1947V420L1830 330 1660 240 1480 160z" />
        <path d="M1700 760L1947 640V998H1640z" />
      </g>
      <g fill="#c5e6a6">
        <path d="M290 185Q330 160 385 170 420 200 360 225L300 235Q280 220 290 185z" />
        <path d="M800 380Q840 320 900 350 950 390 935 440L900 480 860 400 830 470 800 430z" />
        <path d="M880 830L945 840 925 895 895 885z" />
        <path d="M600 930L660 925 665 960 620 985z" />
        <path d="M640 900L700 905 690 925 650 920z" />
        <path d="M1260 39L1310 50 1290 90 1250 60z" />
        <path d="M1160 360L1200 345 1200 385 1155 400z" />
        <path d="M1400 900Q1450 860 1570 820L1610 880Q1560 920 1440 920z" />
        <path d="M1720 500L1830 480 1880 500 1800 540 1730 530z" />
        <path d="M1840 590L1900 560 1947 570V620L1880 600z" />
        <path d="M1600 150L1650 130 1660 190 1610 190z" />
        <path d="M1890 150L1930 140 1940 190 1900 180z" />
        <path d="M1390 190L1400 270 1410 260 1415 200z" />
        <path d="M1430 680L1490 670 1500 710 1430 720z" />
      </g>
      <g fill="#f3e1ea">
        <path d="M770 800L800 795 810 880 760 890z" />
        <path d="M225 260L250 245 250 270 230 280z" />
        <path d="M1035 170L1060 160 1055 185z" />
      </g>
      <g fill="#f8e2c8">
        <path d="M180 500L200 500 215 550 195 570z" />
        <path d="M1010 420L1050 440 1040 480 1000 470z" />
        <path d="M900 590L915 600 910 650z" />
      </g>
      <path d="M365 610L400 530 450 480 480 430 530 410 510 480 440 555z" fill="#d6d6d6" />
      <g fill="none" stroke="#cfcfcf" strokeWidth="4">
        <path d="M27 320C200 200 260 140 400 100S600 100 720 160L950 240M460 430C440 370 520 330 540 390L500 500 370 610 240 780C210 900 280 930 350 910L520 810 960 740" />
        <path d="M640 280L540 400M1060 130Q1200 120 1300 190L1360 260M1180 480L1240 640 1310 760 1430 900 1480 998M1240 640L1350 680 1540 650 1850 620" />
        <path d="M1215 600L1300 720M1225 600L1300 780M1210 620L1290 800" strokeWidth="7" />
      </g>
      <g fill="none" stroke="#a5cdfb" strokeLinejoin="round">
        <path d="M326 998C310 880 310 770 370 710 420 660 500 640 560 622 640 610 700 640 745 570L800 470V400C800 360 850 330 880 290L960 220 1010 120 1027 39" strokeWidth="11" />
        <path d="M620 620V650M650 620L645 570M710 595L712 640M1840 500Q1780 460 1740 500" strokeWidth="9" />
      </g>
      <path d="M630 575L655 565 655 590 645 600z M1860 465L1947 460V500L1880 495z M1640 510L1670 490 1660 550z M490 945L545 955 550 968 500 955z" fill="#a5cdfb" />
      <g fill="none" stroke="#fff" strokeWidth="6" strokeLinejoin="round">
        {minorRoads.map((d) => (
          <path key={d} d={d} />
        ))}
      </g>
      <g fill="none" stroke="#f2cf86" strokeWidth="10" strokeLinejoin="round">
        {yellowRoads.map((d) => (
          <path key={d} d={d} />
        ))}
      </g>
      <g fill="none" stroke="#fbe2a0" strokeWidth="6" strokeLinejoin="round">
        {yellowRoads.map((d) => (
          <path key={d} d={d} />
        ))}
      </g>
      <g fill="none" strokeLinejoin="round">
        <g stroke="#e0a25c" strokeWidth="15">
          {highways.map((d) => (
            <path key={d} d={d} />
          ))}
        </g>
        <g stroke="#fbc888" strokeWidth="11">
          {highways.map((d) => (
            <path key={d} d={d} />
          ))}
        </g>
        <g stroke="#e99b32" strokeWidth="12">
          {mainRoads.map((d) => (
            <path key={d} d={d} />
          ))}
        </g>
        <g stroke="#fdd28c" strokeWidth="6">
          {mainRoads.map((d) => (
            <path key={d} d={d} />
          ))}
        </g>
      </g>

      <g stroke="#fff" strokeOpacity=".8" strokeWidth="5" paintOrder="stroke">
        <g fill="#4a4236">
          {towns.map(([x, y, name, size]) => (
            <text key={name} x={x} y={y} fontSize={size}>
              {name}
            </text>
          ))}
          <text x="930" y="585" fontSize="47" fontWeight="500">
            Lille
          </text>
        </g>
        <g fill="#8c7a6b" fontSize="27">
          {districts.map(([x, y, name]) => (
            <text key={name} x={x} y={y}>
              {name}
            </text>
          ))}
        </g>
        <g fill="#7a5a45">
          {places.map(([x, y, name, size]) => (
            <text key={name} x={x} y={y} fontSize={size}>
              {name}
            </text>
          ))}
        </g>
      </g>

      <g fontSize="28" textAnchor="middle">
        {roadSigns.map(([x, y, name]) => {
          const w = name.length * 15 + 22;
          return (
            <g key={`${name}-${x}`}>
              <rect x={x - w / 2} y={y - 17} width={w} height="34" fill="#ffdb3a" stroke="#dfae2c" strokeWidth="3" />
              <text x={x} y={y + 10} fill="#3e3a1e">
                {name}
              </text>
            </g>
          );
        })}
        {redSigns.map(([x, y, name]) => {
          const w = name.length * 16 + 19;
          return (
            <g key={`${name}-${x}`}>
              <rect x={x - w / 2} y={y - 17} width={w} height="34" fill="#dd6565" />
              <text x={x} y={y + 10} fill="#fff" fontWeight="700">
                {name}
              </text>
            </g>
          );
        })}
        <rect x="1334" y="929" width="64" height="32" fill="#67a543" />
        <text x="1366" y="955" fill="#fff" fontWeight="700">
          E42
        </text>
      </g>

      <g stroke="#fff" strokeWidth="3">
        <circle cx="871" cy="445" r="20" fill="#8a6c58" />
        <circle cx="1021" cy="420" r="20" fill="#8a6c58" />
        <circle cx="1789" cy="455" r="20" fill="#8a6c58" />
        <circle cx="1615" cy="808" r="20" fill="#8a6c58" />
      </g>
      <g fill="#fff">
        <ellipse cx="871" cy="451" rx="7" ry="5" />
        <circle cx="861" cy="444" r="3" />
        <circle cx="867" cy="437" r="3" />
        <circle cx="875" cy="437" r="3" />
        <circle cx="881" cy="444" r="3" />
        <path d="M1012 428v-12h5v12zM1019 428v-20h5v20zM1026 428v-8h5v8z" />
        <path d="M1778 452l11-8 11 8zM1780 454h18v10h-18z" />
        <path d="M1604 800q6 10 10 2 6-8 12 0v14q-12 6-20-2z" />
      </g>

      <defs>
        <linearGradient id="pin" x1="0" y1="0" x2="0" y2="1">
          <stop offset="0" stopColor="#fb7064" />
          <stop offset="1" stopColor="#dd3a30" />
        </linearGradient>
      </defs>
      <path d="M987 518C985 480 957 470 957 441a30 30 0 0 1 60 0C1017 470 989 480 987 518z" fill="url(#pin)" stroke="#a02c22" strokeWidth="3" />
      <circle cx="987" cy="441" r="9" fill="#560d08" />

      <g fontSize="52" fontWeight="500" stroke="#fff" strokeWidth="6" paintOrder="stroke">
        <text x="46" y="979">
          <tspan fill="#4285f4">G</tspan>
          <tspan fill="#ea4335">o</tspan>
          <tspan fill="#fbbc05">o</tspan>
          <tspan fill="#4285f4">g</tspan>
          <tspan fill="#34a853">l</tspan>
          <tspan fill="#ea4335">e</tspan>
        </text>
      </g>
      <rect x="1581" y="955" width="366" height="44" fill="#f5f3ef" fillOpacity=".85" />
      <text x="1941" y="986" textAnchor="end" fontSize="33" fill="#444">
        Map data ©2018 Google
      </text>
    </svg>
  );
}

function RightPage() {
  return (
    <main className="min-w-0 flex-1 overflow-hidden bg-white px-[47px] font-['Liberation_Sans'] text-base leading-[26px] text-[#555]">
      <h1 className="mt-[29px] text-center text-5xl leading-[60px] font-bold">Quelle est mon adresse IP ?</h1>
      <p className="mt-[46px] mb-[39px] text-center font-['Liberation_Mono'] text-[32px] leading-10 font-bold text-[#42afe3]">
        193.48.57.162
      </p>
      <LilleMap />
      <p className="mt-[10px] text-center text-[11px] leading-[18px]">Localisation : Lille (France)</p>
      <hr className="mt-[54px] border-[#e1e1e1]" />
      <h2 className="mt-[47px] text-3xl leading-10">
        A propos de <em>mon IP</em>
      </h2>
      <p className="mt-[17px]">
        Une adresse IP (Internet Protocol) est un numéro unique assigné à chaque appareil souhaitant entrer en
        communication avec Internet : ordinateur, téléphone, objet connecté...L'adresse IP a principalement deux
        fonctions : identifier un réseau ou un hôte ou connaître une localisation.D'abord codée sur 32bits (Protocol
        IPV4), l'adresse IP un numéro assigné par l'IANA qui est l'organisme chargé leurs attributions. Notamment via
        des accords régionaux et les différents fournisseurs d'accès locaux (Téléphonie mobile et Internet notamment).
        Face à la pénurie d'adresses IP disponible, due notamment l'émérgence de "l'Internet des objets", un nouveau
        standard sur 128bits crée dés 1995 est en cours de déploiement (norme IPV6).
      </p>
    </main>
  );
}

/* ---------- VirtualBox window ---------- */

function StatusBar() {
  return (
    <footer className="flex h-[21px] shrink-0 items-center justify-end gap-[5px] pr-px">
      <svg viewBox="0 0 16 16" className="size-4">
        <rect x="2" y="1" width="12" height="14" rx="1" fill="#e3f1ff" stroke="#1666c0" strokeWidth="1.500" />
        <path d="M8 3a3 3 0 1 1 0 6 3 3 0 0 1 0-6zM4 13l4-5" fill="none" stroke="#1a6fd0" strokeWidth="1.500" />
      </svg>
      <svg viewBox="0 0 16 16" className="size-4" fill="none" stroke="#aaa">
        <circle cx="8" cy="8" r="6.500" fill="#eee" />
        <circle cx="8" cy="8" r="2" fill="#fff" />
      </svg>
      <svg viewBox="0 0 16 16" className="size-4">
        <path d="M1 1l4 2 4-2v9L5 8 1 9z" fill="#3aa0f0" stroke="#1458a8" />
        <rect x="10" y="4" width="5" height="8" rx="2.500" fill="#aaa" stroke="#888" />
        <path d="M12.500 12v3M10 15h5" stroke="#888" />
      </svg>
      <svg viewBox="0 0 16 16" className="size-4" stroke="#163d80">
        <rect x="5.500" y="1.500" width="9" height="7" fill="#d8e8fb" />
        <rect x="1.500" y="6.500" width="8" height="6" fill="#3a97ee" />
        <path d="M3 14.500h6M11 10.500h3" />
      </svg>
      <svg viewBox="0 0 16 16" className="size-4">
        <path d="M2 11l6-7 4 4-7 6-4 1z" fill="#2a8ae6" stroke="#12509c" />
        <path d="M10 4l2-3 3 3-3 3z" fill="#eee" stroke="#777" />
      </svg>
      <svg viewBox="0 0 16 16" className="size-4">
        <path d="M1.500 13.500v-9h8l1-2h4v11z" fill="#d2d2d2" stroke="#a8a8a8" />
      </svg>
      <svg viewBox="0 0 16 16" className="size-4">
        <rect x="1" y="1.500" width="14" height="10" fill="#2c90ea" stroke="#1a56a4" />
        <path d="M2 11l12-9v9z" fill="#6cbcff" />
        <path d="M4 14h8" stroke="#333" strokeWidth="1.500" />
      </svg>
      <svg viewBox="0 0 16 16" className="size-4" stroke="#163d80">
        <rect x="1.500" y="5.500" width="9" height="8" fill="#3a97ee" />
        <rect x="6.500" y="1.500" width="8" height="7" fill="#6f86dc" />
      </svg>
      <svg viewBox="0 0 16 16" className="size-4">
        <rect x="2" y="2" width="12" height="12" fill="#dfe3ff" stroke="#4a55c8" strokeWidth="2" />
        <path d="M5.500 5v4q0 2 2.500 2t2.500-2V5" fill="none" stroke="#4a55c8" strokeWidth="1.500" />
        <path d="M4 .5h9M4 15.500h9" stroke="#4a55c8" strokeDasharray="1 1" />
      </svg>
      <svg viewBox="0 0 16 16" className="size-4">
        <circle cx="7" cy="8" r="6.500" fill="#f0f6ff" stroke="#1a6fd0" />
        <path d="M2 5l5 1 1 7-4-2z" fill="#2a80d8" />
        <path d="M8 5l6 4-5 6-2-2 3-4-4-2z" fill="#8bd13c" stroke="#3c7d14" />
      </svg>
      <svg viewBox="0 0 16 16" className="size-4">
        <rect x="1" y="1" width="14" height="14" rx="2" fill="#cfe3f8" stroke="#1a5ca8" strokeWidth="1.500" />
        <path d="M6.500 4h3v4H12l-4 4.500L4 8h2.500z" fill="#222" />
      </svg>
      <span className="font-['Open_Sans'] text-[11px] text-black">CTRL DROITE</span>
      <svg viewBox="0 0 10 10" className="ml-1 size-[10px] self-end" fill="#b5b5b5">
        <path d="M7 1h2v2H7zM4 4h2v2H4zM7 4h2v2H7zM1 7h2v2H1zM4 7h2v2H4zM7 7h2v2H7z" />
      </svg>
    </footer>
  );
}

function VirtualBoxWindow() {
  const menu = ["Fichier", "Machine", "Écran", "Entrée", "Périphériques", "Aide"];
  return (
    <section className="flex min-w-0 flex-1 flex-col overflow-hidden border border-t-0 border-[#1883d7] bg-[#f0f0f0]">
      <header className="flex h-[30px] shrink-0 items-center bg-white pl-2 font-['Open_Sans'] text-[11px] text-black">
        <svg viewBox="0 0 16 16" className="mr-[6px] size-4">
          <rect width="16" height="16" fill="#2f3a48" />
          <path d="M2 15l4-7 3 1 4-6 3 1-3 6-4 1-3 5z" fill="#f6a04a" />
          <path d="M1 5q5 5 7 0v3q-4 3-7 0z" fill="#e8551c" />
          <rect width="7" height="4" fill="#a7adb3" />
        </svg>
        Ubuntu [En fonction] - Oracle VM VirtualBox
        <div className="ml-auto flex">
          <button aria-label="Réduire" className="flex h-7 w-[46px] items-center justify-center">
            <Minus className="size-[14px]" strokeWidth={1.700} />
          </button>
          <button aria-label="Agrandir" className="flex h-7 w-[45px] items-center justify-center">
            <Square className="size-3" strokeWidth={2.200} />
          </button>
          <button aria-label="Fermer" className="flex h-7 w-[46px] items-center justify-center">
            <X className="size-4" strokeWidth={1.500} />
          </button>
        </div>
      </header>
      <nav className="flex h-[21px] shrink-0 items-center gap-[17px] bg-white pl-2 font-['Open_Sans'] text-[11px] text-black">
        {menu.map((item) => (
          <button key={item}>{item}</button>
        ))}
      </nav>
      <div className="mr-[3px] ml-[3px] flex min-h-0 flex-1 flex-col">
        <TopPanel />
        <div className="flex min-h-0 flex-1">
          <Launcher />
          <div className="flex min-w-0 flex-1 flex-col">
            <FirefoxTabs />
            <FirefoxToolbar />
            <div className="flex min-h-0 flex-1">
              <RightPage />
              <div className="w-[10px] bg-[#e6e6e6]">
                <div className="ml-auto h-[264px] w-[3px] bg-[#f0825a]" />
              </div>
            </div>
          </div>
        </div>
      </div>
      <StatusBar />
    </section>
  );
}

export default function App() {
  return (
    <div className="flex h-screen w-full overflow-hidden bg-white">
      <ChromeWindow />
      <VirtualBoxWindow />
    </div>
  );
}
